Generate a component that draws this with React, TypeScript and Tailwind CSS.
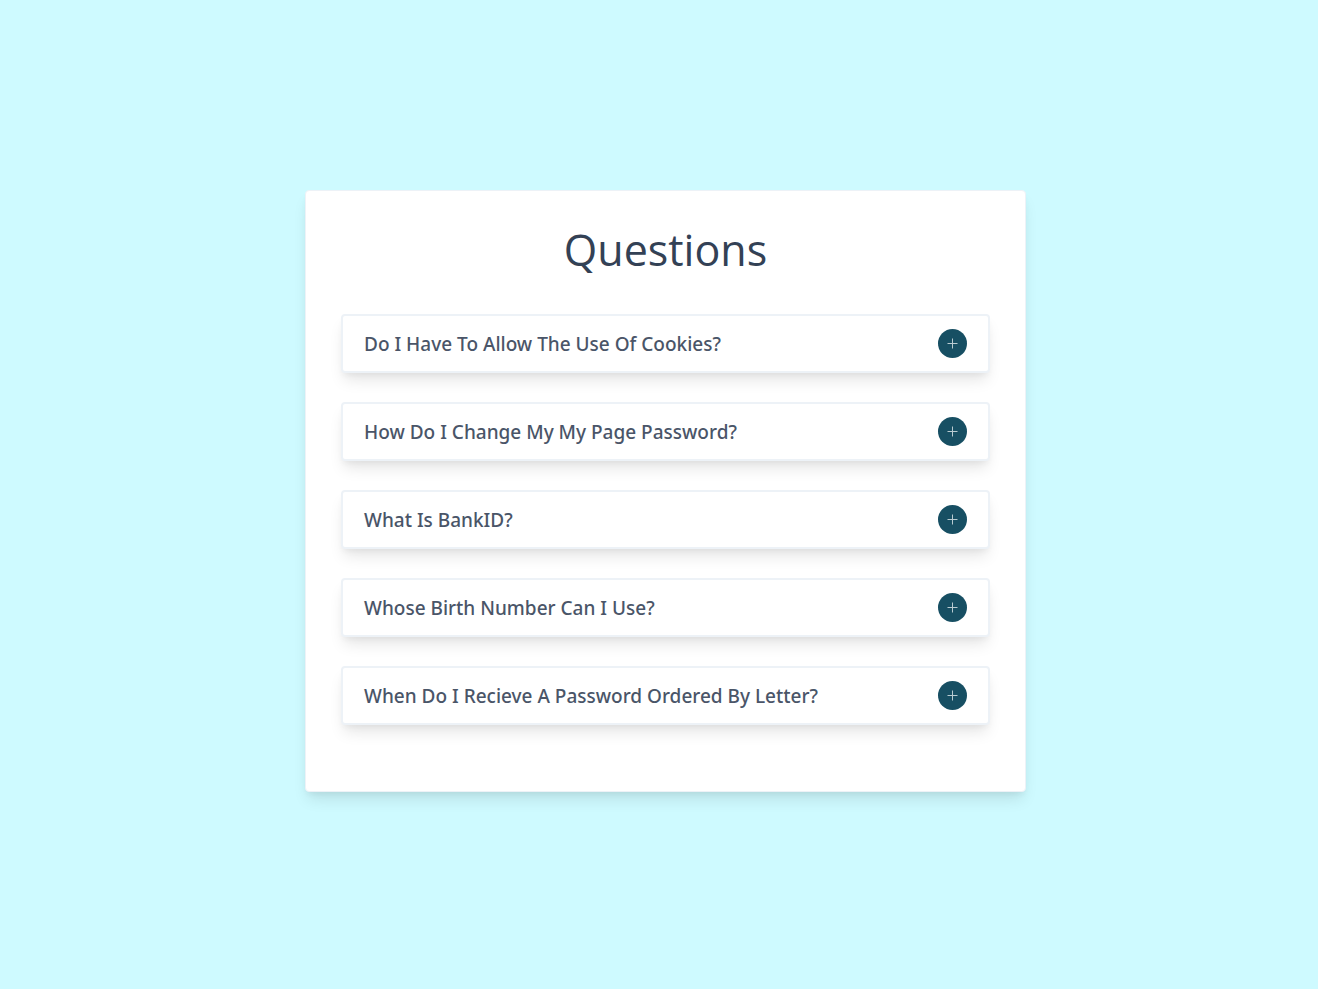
import React, { useState } from "react";

const questions = [
  {
    id: 1,
    title: "Do I Have To Allow The Use Of Cookies?",
    info: "No. You can turn cookies off in your browser settings at any time.",
  },
  {
    id: 2,
    title: "How Do I Change My My Page Password?",
    info: "Log in to My Page, open your profile and choose a new password.",
  },
  {
    id: 3,
    title: "What Is BankID?",
    info: "BankID is a personal electronic ID for secure identification and signing.",
  },
  {
    id: 4,
    title: "Whose Birth Number Can I Use?",
    info: "You can only use your own birth number.",
  },
  {
    id: 5,
    title: "When Do I Recieve A Password Ordered By Letter?",
    info: "The letter normally arrives within a few working days.",
  },
];

type QuestionProps = {
  id: number;
  title: string;
  info: string;
};

const Question = ({ id, title, info }: QuestionProps) => {
  const [open, setOpen] = useState(false);

  return (
    <article className="rounded-[4px] border-2 border-[#edf2f7] bg-white px-[21px] py-[13px] shadow-[0_10px_15px_-3px_rgba(0,0,0,0.1),0_4px_6px_-2px_rgba(0,0,0,0.05)]">
      <header className="flex items-center justify-between gap-4">
        <h2
          id={`question-${id}`}
          className="font-['Noto_Sans','Open_Sans',sans-serif] text-[19px] leading-7 font-medium text-[#4a5568]"
        >
          {title}
        </h2>
        <button
          type="button"
          aria-labelledby={`question-${id}`}
          aria-expanded={open}
          onClick={() => setOpen(!open)}
          className="flex size-[29px] shrink-0 cursor-pointer items-center justify-center rounded-full bg-[#174f63] text-[#b9cbd1]"
        >
          <svg width="11" height="11" viewBox="0 0 11 11" fill="none" stroke="currentColor" strokeWidth="1">
            <path d="M0.5 5.5h10" />
            {!open && <path d="M5.5 0.5v10" />}
          </svg>
        </button>
      </header>
      {open && <p className="mt-3 text-base text-[#4a5568]">{info}</p>}
    </article>
  );
};

const App = () => {
  return (
    <main className="flex min-h-screen items-center justify-center bg-[#cefaff] pb-[7px] pl-[13px] font-['Open_Sans','Noto_Sans',sans-serif]">
      <section className="w-full max-w-[721px] rounded-[4px] border border-[#edf2f7] bg-white px-[35px] pt-[29px] pb-[66px] shadow-[0_10px_15px_-3px_rgba(0,0,0,0.1),0_4px_6px_-2px_rgba(0,0,0,0.05)]">
        <h1 className="mb-[34px] text-center text-[43px] leading-[60px] font-normal text-[#334155]">
          Questions
        </h1>
        <div className="flex flex-col gap-[29px]">
          {questions.map((question) => (
            <Question key={question.id} {...question} />
          ))}
        </div>
      </section>
    </main>
  );
};

export default App;
